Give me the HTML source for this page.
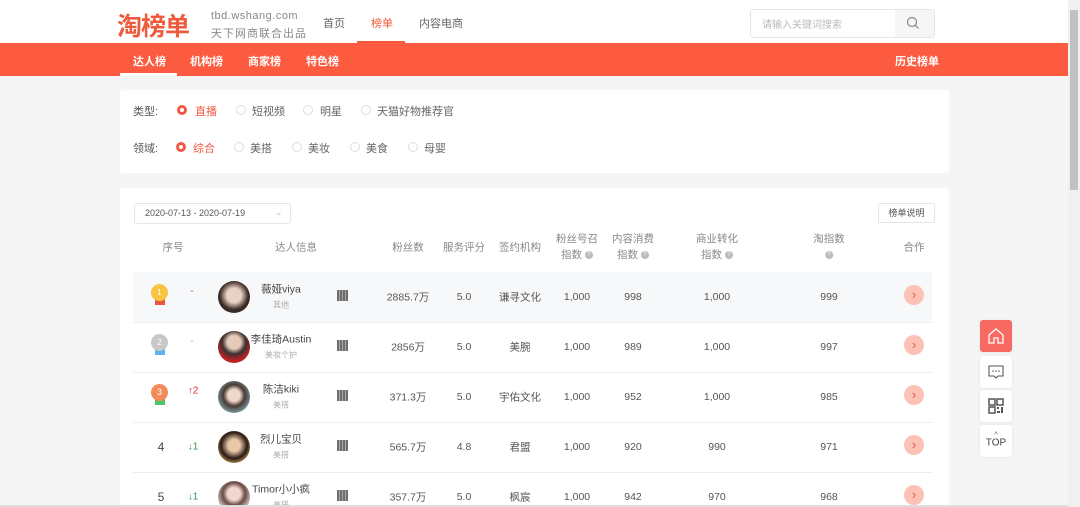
<!DOCTYPE html>
<html><head><meta charset="utf-8"><style>
*{margin:0;padding:0;box-sizing:border-box}
html{width:1080px;height:507px;overflow:hidden}
body{width:1080px;height:507px;overflow:hidden;background:#f5f5f5;font-family:"Liberation Sans","Noto Sans CJK SC",sans-serif;color:#333;position:relative;font-size:11px}
.abs{position:absolute}
.hdr{left:0;top:0;width:1068px;height:43px;background:#fff}
.bar{left:0;top:43px;width:1068px;height:33px;background:#fd5b40}
.scroll{left:1068px;top:0;width:12px;height:507px;background:#f0f0f0}
.thumb{left:1070px;top:10px;width:8px;height:180px;background:#c1c1c1}
.card{background:#fff;border-radius:3px}
.c{position:absolute;transform:translate(-50%,-50%);white-space:nowrap;text-align:center}
.radio{position:absolute;width:10px;height:10px;border-radius:50%;border:1px solid #ddd;background:#fff}
.radio.on{border:3px solid #f05a45}
.q{display:inline-block;width:8px;height:8px;border-radius:50%;background:#bbb;color:#fff;font-size:6px;line-height:8px;vertical-align:middle}
.av{position:absolute;width:32px;height:32px;border-radius:50%}
.qr{position:absolute;width:11px;height:11px;background:repeating-linear-gradient(90deg,#555 0 2px,#999 2px 3px),#555;opacity:.85}
.go{position:absolute;width:20px;height:20px;border-radius:50%;background:#fcc2b6;color:#e8543c;font-size:13px;line-height:19px;text-align:center}
.side{position:absolute;left:980px;width:32px;height:32px;background:#fff;border-radius:3px;box-shadow:0 0 3px rgba(0,0,0,.08)}
</style></head><body>
<div class="abs hdr"></div>
<div class="abs" style="left:117px;top:7px;font-size:25px;font-weight:bold;color:#f05a3c;letter-spacing:-1px">淘榜单</div>
<div class="abs" style="left:211px;top:10px;font-size:11px;color:#888;letter-spacing:.5px">tbd.wshang.com</div>
<div class="abs" style="left:211px;top:25px;font-size:11px;color:#888;letter-spacing:1px">天下网商联合出品</div>
<div class="abs" style="left:323px;top:15px;font-size:11px;color:#666">首页</div>
<div class="abs" style="left:371px;top:15px;font-size:11px;color:#f05a3c">榜单</div>
<div class="abs" style="left:357px;top:41px;width:48px;height:2px;background:#f05a3c"></div>
<div class="abs" style="left:419px;top:15px;font-size:11px;color:#666">内容电商</div>
<div class="abs" style="left:750px;top:9px;width:185px;height:29px;border:1px solid #e6e6e6;border-radius:3px;background:#fff"></div>
<div class="abs" style="left:895px;top:10px;width:39px;height:27px;background:#f5f6f8"></div>
<svg class="abs" style="left:906px;top:16px" width="14" height="14" viewBox="0 0 14 14"><circle cx="6" cy="6" r="4.5" fill="none" stroke="#888" stroke-width="1.2"/><path d="M9.3 9.3L12.5 12.5" stroke="#888" stroke-width="1.2"/></svg>
<div class="abs" style="left:762px;top:16px;font-size:10px;color:#bbb">请输入关键词搜索</div>
<div class="abs bar"></div>
<div class="abs" style="left:133px;top:53px;color:#fff;font-weight:bold;font-size:11px">达人榜</div>
<div class="abs" style="left:120px;top:73px;width:57px;height:3px;background:#fff"></div>
<div class="abs" style="left:190px;top:53px;color:#fff;font-weight:bold">机构榜</div>
<div class="abs" style="left:248px;top:53px;color:#fff;font-weight:bold">商家榜</div>
<div class="abs" style="left:306px;top:53px;color:#fff;font-weight:bold">特色榜</div>
<div class="abs" style="left:895px;top:53px;color:#fff;font-weight:bold">历史榜单</div>
<div class="abs scroll"></div><div class="abs thumb"></div>

<div class="abs card" style="left:120px;top:90px;width:829px;height:83px"></div>
<div class="abs" style="left:133px;top:103px;color:#555">类型:</div>
<div class="radio on" style="left:177px;top:105px"></div><div class="abs" style="left:195px;top:103px;color:#f05a45">直播</div>
<div class="radio" style="left:236px;top:105px"></div><div class="abs" style="left:252px;top:103px;color:#666">短视频</div>
<div class="radio" style="left:303px;top:105px"></div><div class="abs" style="left:320px;top:103px;color:#666">明星</div>
<div class="radio" style="left:361px;top:105px"></div><div class="abs" style="left:377px;top:103px;color:#666">天猫好物推荐官</div>
<div class="abs" style="left:133px;top:140px;color:#555">领域:</div>
<div class="radio on" style="left:176px;top:142px"></div><div class="abs" style="left:193px;top:140px;color:#f05a45">综合</div>
<div class="radio" style="left:234px;top:142px"></div><div class="abs" style="left:250px;top:140px;color:#666">美搭</div>
<div class="radio" style="left:292px;top:142px"></div><div class="abs" style="left:308px;top:140px;color:#666">美妆</div>
<div class="radio" style="left:350px;top:142px"></div><div class="abs" style="left:366px;top:140px;color:#666">美食</div>
<div class="radio" style="left:408px;top:142px"></div><div class="abs" style="left:424px;top:140px;color:#666">母婴</div>

<div class="abs card" style="left:120px;top:188px;width:829px;height:319px"></div>
<div class="abs" style="left:134px;top:203px;width:157px;height:21px;border:1px solid #e6e6e6;border-radius:3px"></div>
<div class="abs" style="left:145px;top:208px;font-size:9px;color:#555">2020-07-13 - 2020-07-19</div>
<div class="abs" style="left:275px;top:207px;font-size:9px;color:#bbb">⌄</div>
<div class="abs" style="left:878px;top:203px;width:57px;height:20px;border:1px solid #e6e6e6;border-radius:2px;font-size:9px;line-height:18px;text-align:center;color:#555">榜单说明</div>

<div style="color:#888;font-size:10.5px">
<div class="c" style="left:173px;top:247px">序号</div>
<div class="c" style="left:296px;top:247px">达人信息</div>
<div class="c" style="left:408px;top:247px">粉丝数</div>
<div class="c" style="left:464px;top:247px">服务评分</div>
<div class="c" style="left:520px;top:247px">签约机构</div>
<div class="c" style="left:577px;top:247px;line-height:16px">粉丝号召<br>指数 <span class="q">?</span></div>
<div class="c" style="left:633px;top:247px;line-height:16px">内容消费<br>指数 <span class="q">?</span></div>
<div class="c" style="left:717px;top:247px;line-height:16px">商业转化<br>指数 <span class="q">?</span></div>
<div class="c" style="left:829px;top:247px;line-height:16px">淘指数<br><span class="q">?</span></div>
<div class="c" style="left:914px;top:247px">合作</div>
</div>

<div class="abs" style="left:133px;top:272px;width:799px;height:50px;background:#f7f8fa"></div>
<div class="abs" style="left:133px;top:322px;width:799px;height:1px;background:#eee"></div>
<div class="abs" style="left:133px;top:372px;width:799px;height:1px;background:#eee"></div>
<div class="abs" style="left:133px;top:422px;width:799px;height:1px;background:#eee"></div>
<div class="abs" style="left:133px;top:472px;width:799px;height:1px;background:#eee"></div>

<div class="abs" style="left:155px;top:298px;width:10px;height:7px;background:#e8583f"></div>
<div class="abs" style="left:151px;top:284px;width:17px;height:17px;border-radius:50%;background:#f8c540;color:#fff;font-size:8px;text-align:center;line-height:17px">1</div>
<div class="abs" style="left:155px;top:348px;width:10px;height:7px;background:#58b3ea"></div>
<div class="abs" style="left:151px;top:334px;width:17px;height:17px;border-radius:50%;background:#c8c8c8;color:#fff;font-size:8px;text-align:center;line-height:17px">2</div>
<div class="abs" style="left:155px;top:398px;width:10px;height:7px;background:#4fc46a"></div>
<div class="abs" style="left:151px;top:384px;width:17px;height:17px;border-radius:50%;background:#f38a5a;color:#fff;font-size:9px;text-align:center;line-height:17px">3</div>
<div class="c" style="left:161px;top:447px;font-size:12px;color:#444">4</div>
<div class="c" style="left:161px;top:497px;font-size:12px;color:#444">5</div>
<div class="c" style="left:192px;top:291px;color:#888">-</div>
<div class="c" style="left:192px;top:341px;color:#bbb">-</div>
<div class="c" style="left:193px;top:391px;color:#d33;font-size:10px">↑2</div>
<div class="c" style="left:193px;top:447px;color:#2a9a4a;font-size:10px">↓1</div>
<div class="c" style="left:193px;top:497px;color:#2a9a4a;font-size:10px">↓1</div>

<div class="av" style="left:218px;top:281px;background:radial-gradient(circle at 50% 45%,#e8d2c4 30%,#3a2a24 60%)"></div>
<div class="av" style="left:218px;top:331px;background:radial-gradient(circle at 50% 35%,#e6cbb8 25%,#3b3030 45%,#b22 70%)"></div>
<div class="av" style="left:218px;top:381px;background:radial-gradient(circle at 50% 45%,#eed8cc 25%,#4a3a33 45%,#7a9aa0 75%)"></div>
<div class="av" style="left:218px;top:431px;background:radial-gradient(circle at 50% 45%,#e8c8a8 25%,#2a1a14 55%,#c8a060 80%)"></div>
<div class="av" style="left:218px;top:481px;background:radial-gradient(circle at 50% 40%,#f0d8d0 25%,#6a4a44 45%,#e0d8d8 75%)"></div>

<div style="font-size:10.5px;color:#444">
<div class="c" style="left:281px;top:289px">薇娅viya</div><div class="c" style="left:281px;top:305px;font-size:8px;color:#aaa">其他</div>
<div class="c" style="left:281px;top:339px">李佳琦Austin</div><div class="c" style="left:281px;top:355px;font-size:8px;color:#aaa">美妆个护</div>
<div class="c" style="left:281px;top:389px">陈洁kiki</div><div class="c" style="left:281px;top:405px;font-size:8px;color:#aaa">美搭</div>
<div class="c" style="left:281px;top:439px">烈儿宝贝</div><div class="c" style="left:281px;top:455px;font-size:8px;color:#aaa">美搭</div>
<div class="c" style="left:281px;top:489px">Timor小小疯</div><div class="c" style="left:281px;top:505px;font-size:8px;color:#aaa">美搭</div>
</div>
<div class="qr" style="left:337px;top:290px"></div>
<div class="qr" style="left:337px;top:340px"></div>
<div class="qr" style="left:337px;top:390px"></div>
<div class="qr" style="left:337px;top:440px"></div>
<div class="qr" style="left:337px;top:490px"></div>

<div style="font-size:10.5px;color:#555">
<div class="c" style="left:408px;top:297px">2885.7万</div><div class="c" style="left:464px;top:297px">5.0</div><div class="c" style="left:520px;top:297px">谦寻文化</div><div class="c" style="left:577px;top:297px">1,000</div><div class="c" style="left:633px;top:297px">998</div><div class="c" style="left:717px;top:297px">1,000</div><div class="c" style="left:829px;top:297px">999</div>
<div class="c" style="left:408px;top:347px">2856万</div><div class="c" style="left:464px;top:347px">5.0</div><div class="c" style="left:520px;top:347px">美腕</div><div class="c" style="left:577px;top:347px">1,000</div><div class="c" style="left:633px;top:347px">989</div><div class="c" style="left:717px;top:347px">1,000</div><div class="c" style="left:829px;top:347px">997</div>
<div class="c" style="left:408px;top:397px">371.3万</div><div class="c" style="left:464px;top:397px">5.0</div><div class="c" style="left:520px;top:397px">宇佑文化</div><div class="c" style="left:577px;top:397px">1,000</div><div class="c" style="left:633px;top:397px">952</div><div class="c" style="left:717px;top:397px">1,000</div><div class="c" style="left:829px;top:397px">985</div>
<div class="c" style="left:408px;top:447px">565.7万</div><div class="c" style="left:464px;top:447px">4.8</div><div class="c" style="left:520px;top:447px">君盟</div><div class="c" style="left:577px;top:447px">1,000</div><div class="c" style="left:633px;top:447px">920</div><div class="c" style="left:717px;top:447px">990</div><div class="c" style="left:829px;top:447px">971</div>
<div class="c" style="left:408px;top:497px">357.7万</div><div class="c" style="left:464px;top:497px">5.0</div><div class="c" style="left:520px;top:497px">枫宸</div><div class="c" style="left:577px;top:497px">1,000</div><div class="c" style="left:633px;top:497px">942</div><div class="c" style="left:717px;top:497px">970</div><div class="c" style="left:829px;top:497px">968</div>
</div>
<div class="go" style="left:904px;top:285px">›</div>
<div class="go" style="left:904px;top:335px">›</div>
<div class="go" style="left:904px;top:385px">›</div>
<div class="go" style="left:904px;top:435px">›</div>
<div class="go" style="left:904px;top:485px">›</div>
<div class="abs" style="left:0;top:505px;width:1068px;height:2px;background:#ddd"></div>

<div class="side" style="top:320px;background:#f76a62"><svg width="32" height="32" viewBox="0 0 32 32"><path d="M9 15L16 9L23 15V23H18V18H14V23H9Z" fill="none" stroke="#fff" stroke-width="1.3"/></svg></div>
<div class="side" style="top:356px"><svg width="32" height="32" viewBox="0 0 32 32"><path d="M9 10H23V20H18L16 22L14 20H9Z" fill="none" stroke="#555" stroke-width="1.1"/><circle cx="13" cy="15" r=".8" fill="#555"/><circle cx="16" cy="15" r=".8" fill="#555"/><circle cx="19" cy="15" r=".8" fill="#555"/></svg></div>
<div class="side" style="top:390px"><svg width="32" height="32" viewBox="0 0 32 32"><rect x="9" y="9" width="6" height="6" fill="none" stroke="#555" stroke-width="1.5"/><rect x="17" y="9" width="6" height="6" fill="none" stroke="#555" stroke-width="1.5"/><rect x="9" y="17" width="6" height="6" fill="none" stroke="#555" stroke-width="1.5"/><path d="M17 17h2v2h-2zM21 17h2v6h-2zM17 21h3v2h-3z" fill="#555"/></svg></div>
<div class="side" style="top:425px"><div class="c" style="left:16px;top:10px;font-size:8px;color:#666">^</div><div class="c" style="left:16px;top:18px;font-size:10px;color:#444">TOP</div></div>
</body></html>
